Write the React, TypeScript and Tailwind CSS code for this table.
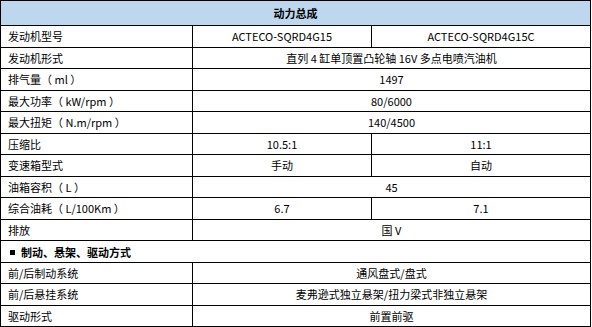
type Row =
  | { kind: "span"; label: string; value: string }
  | { kind: "split"; label: string; a: string; b: string }
  | { kind: "section"; label: string };

const rows: Row[] = [
  { kind: "split", label: "发动机型号", a: "ACTECO-SQRD4G15", b: "ACTECO-SQRD4G15C" },
  { kind: "span", label: "发动机形式", value: "直列 4 缸单顶置凸轮轴 16V 多点电喷汽油机" },
  { kind: "span", label: "排气量（ ml ）", value: "1497" },
  { kind: "span", label: "最大功率（ kW/rpm ）", value: "80/6000" },
  { kind: "span", label: "最大扭矩（ N.m/rpm ）", value: "140/4500" },
  { kind: "split", label: "压缩比", a: "10.5:1", b: "11:1" },
  { kind: "split", label: "变速箱型式", a: "手动", b: "自动" },
  { kind: "span", label: "油箱容积（ L ）", value: "45" },
  { kind: "split", label: "综合油耗（ L/100Km ）", a: "6.7", b: "7.1" },
  { kind: "span", label: "排放", value: "国 V" },
  { kind: "section", label: "制动、悬架、驱动方式" },
  { kind: "span", label: "前/后制动系统", value: "通风盘式/盘式" },
  { kind: "span", label: "前/后悬挂系统", value: "麦弗逊式独立悬架/扭力梁式非独立悬架" },
  { kind: "span", label: "驱动形式", value: "前置前驱" },
];

const heights = [22, 21, 22, 21, 22, 21, 22, 21, 22, 21, 22, 21, 22, 21];

export default function App() {
  return (
    <div
      className="w-[592px] h-[327px] bg-white text-black text-[11px] leading-none"
      style={{ fontFamily: '"Noto Sans CJK SC", "Noto Sans", sans-serif' }}
    >
      <table className="w-[590px] table-fixed border-collapse">
        <colgroup>
          <col className="w-[192px]" />
          <col className="w-[179px]" />
          <col className="w-[219px]" />
        </colgroup>
        <tbody>
          <tr className="h-[25px]">
            <td
              colSpan={3}
              className="border border-black bg-[#bdd7ee] text-center font-bold"
            >
              动力总成
            </td>
          </tr>
          {rows.map((r, i) => (
            <tr key={i} style={{ height: heights[i] }}>
              {r.kind === "section" ? (
                <td colSpan={3} className="border border-black pl-[9px] font-bold">
                  <span className="inline-block w-[5px] h-[5px] bg-black mr-[6px] align-middle" />
                  <span className="align-middle">{r.label}</span>
                </td>
              ) : (
                <>
                  <td className="border border-black pl-[7px]">{r.label}</td>
                  {r.kind === "split" ? (
                    <>
                      <td className="border border-black text-center">{r.a}</td>
                      <td className="border border-black text-center">{r.b}</td>
                    </>
                  ) : (
                    <td colSpan={2} className="border border-black text-center">
                      {r.value}
                    </td>
                  )}
                </>
              )}
            </tr>
          ))}
        </tbody>
      </table>
    </div>
  );
}
